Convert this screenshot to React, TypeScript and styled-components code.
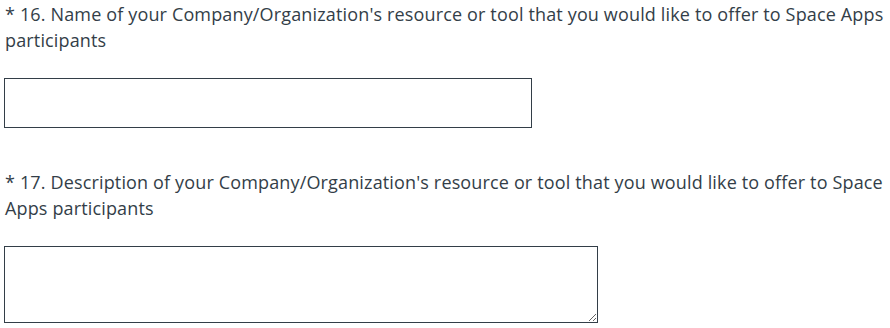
import React from 'react';
import styled, { createGlobalStyle } from 'styled-components';

const GlobalStyle = createGlobalStyle`
  html, body {
    margin: 0;
    padding: 0;
    background: #ffffff;
  }
`;

const Page = styled.main`
  padding: 0 0 0 4px;
  font-family: 'Open Sans', sans-serif;
  color: #333e48;
`;

const Question = styled.section`
  display: flex;
  flex-direction: column;
  align-items: flex-start;
  margin-bottom: 40px;

  &:last-child {
    margin-bottom: 0;
  }
`;

const Title = styled.h2`
  margin: 0;
  padding: 1px 0 0 1px;
  font-size: 18px;
  font-weight: normal;
  letter-spacing: 0.15px;
  line-height: 26px;
`;

const TextInput = styled.input`
  box-sizing: border-box;
  margin-top: 25px;
  width: 528px;
  height: 50px;
  border: 1px solid #333e48;
  border-radius: 0;
  padding: 0 10px;
  font: inherit;
`;

const TextArea = styled.textarea`
  box-sizing: border-box;
  display: block;
  margin-top: 25px;
  width: 594px;
  height: 77px;
  border: 1px solid #333e48;
  border-radius: 0;
  padding: 6px 10px;
  font: inherit;
`;

export default function App() {
  return (
    <Page>
      <GlobalStyle />
      <Question>
        <Title>
          * 16. Name of your Company/Organization's resource or tool that you would like to offer to Space Apps
          participants
        </Title>
        <TextInput type="text" />
      </Question>
      <Question>
        <Title>
          * 17. Description of your Company/Organization's resource or tool that you would like to offer to Space
          Apps participants
        </Title>
        <TextArea />
      </Question>
    </Page>
  );
}
